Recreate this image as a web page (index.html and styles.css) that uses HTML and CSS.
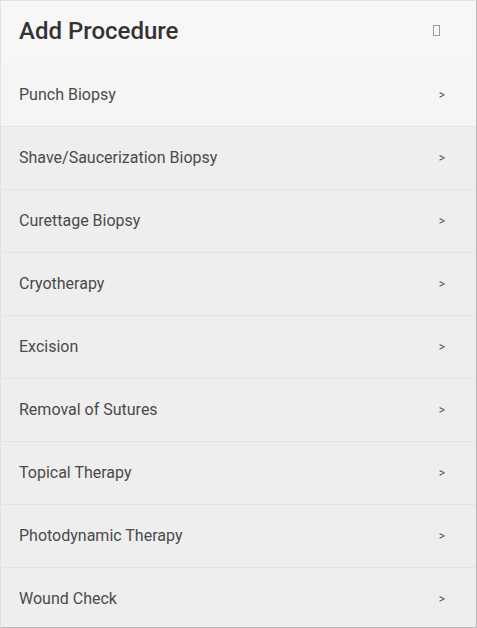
FILE: index.html
```html
<!DOCTYPE html>
<html>
<head>
<meta charset="utf-8">
<link rel="stylesheet" href="styles.css">
</head>
<body>
<div class="panel">
  <div class="header">
    <h1 class="title">Add Procedure</h1>
    <span class="close-icon" aria-label="close"></span>
  </div>
  <ul class="list">
    <li class="item item-active"><span class="label">Punch Biopsy</span><span class="chev">&gt;</span></li>
    <li class="item"><span class="label">Shave/Saucerization Biopsy</span><span class="chev">&gt;</span></li>
    <li class="item"><span class="label">Curettage Biopsy</span><span class="chev">&gt;</span></li>
    <li class="item"><span class="label">Cryotherapy</span><span class="chev">&gt;</span></li>
    <li class="item"><span class="label">Excision</span><span class="chev">&gt;</span></li>
    <li class="item"><span class="label">Removal of Sutures</span><span class="chev">&gt;</span></li>
    <li class="item"><span class="label">Topical Therapy</span><span class="chev">&gt;</span></li>
    <li class="item"><span class="label">Photodynamic Therapy</span><span class="chev">&gt;</span></li>
    <li class="item"><span class="label">Wound Check</span><span class="chev">&gt;</span></li>
  </ul>
</div>
</body>
</html>
```
FILE: styles.css
```css
* { box-sizing: border-box; }
html, body { margin: 0; padding: 0; }
body {
  font-family: Roboto, "Liberation Sans", Arial, sans-serif;
  background: #ffffff;
}
.panel {
  width: 477px;
  height: 628px;
  overflow: hidden;
  border-top: 1px solid #e2e2e2;
  border-left: 1px solid #e2e2e2;
  border-right: 1px solid #b9b9b9;
  border-bottom: 1px solid #b9b9b9;
  background: #eeeeee;
  display: flex;
  flex-direction: column;
}
.header {
  height: 62px;
  flex: 0 0 62px;
  background: #f7f7f7;
  display: flex;
  align-items: center;
  justify-content: space-between;
  padding: 0 36px 3px 18px;
}
.title {
  margin: 0;
  font-size: 24px;
  font-weight: 500;
  color: #333333;
  letter-spacing: 0;
}
.close-icon {
  display: block;
  width: 7px;
  height: 11px;
  border: 1px solid #9a9a9a;
}
.list {
  list-style: none;
  margin: 0;
  padding: 0;
  flex: 1;
}
.item {
  height: 63px;
  display: flex;
  align-items: center;
  justify-content: space-between;
  padding: 0 31px 1px 18px;
  border-top: 1px solid #e4e4e4;
  background: #eeeeee;
}
.item-active {
  background: #f5f5f5;
  border-top-color: #f5f5f5;
}
.label {
  font-size: 16px;
  color: #4a4a4a;
}
.chev {
  font-size: 12px;
  color: #555555;
}
```
